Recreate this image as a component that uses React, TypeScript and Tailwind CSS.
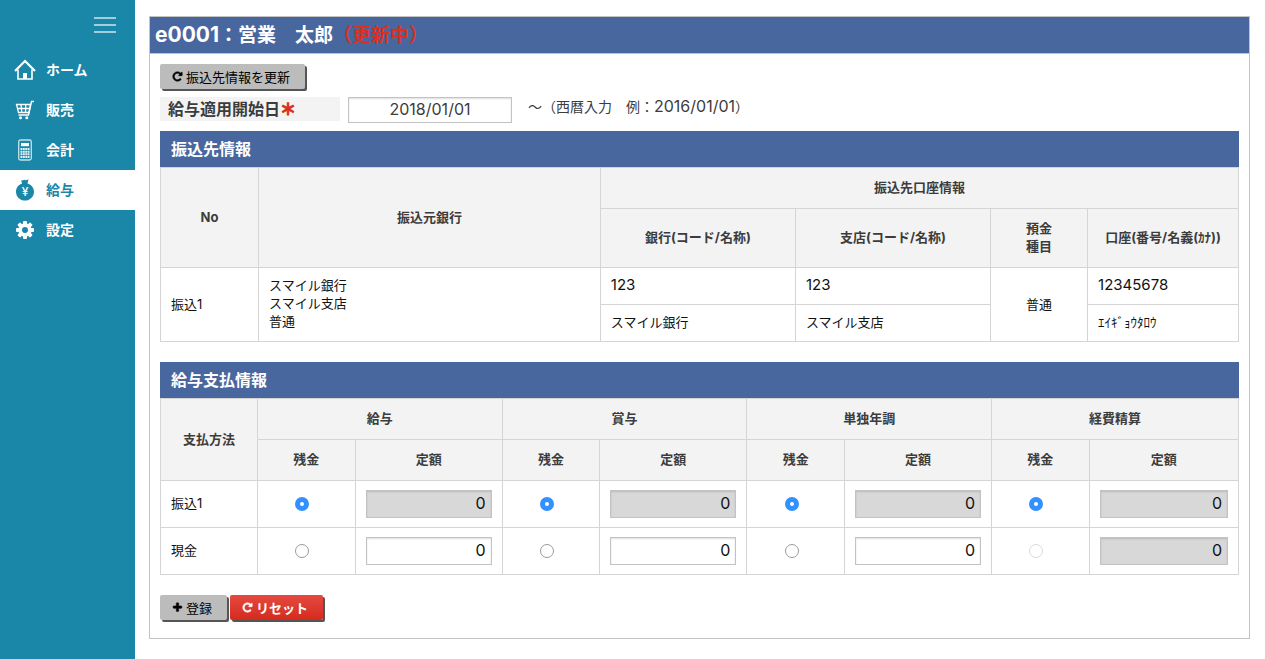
import React, { useState } from 'react';

const menu = [
  { label: 'ホーム', icon: HomeIcon },
  { label: '販売', icon: CartIcon },
  { label: '会計', icon: CalcIcon },
  { label: '給与', icon: MoneyBagIcon, active: true },
  { label: '設定', icon: GearIcon },
];

const payTypes = ['給与', '賞与', '単独年調', '経費精算'];

const payRows = [
  { key: 'furikomi', label: '振込1', fixed: [true, true, true, true] },
  { key: 'genkin', label: '現金', fixed: [false, false, false, true] },
];

function HomeIcon() {
  return (
    <svg width="22" height="22" viewBox="0 0 22 22" fill="none" stroke="currentColor">
      <path d="M1 12 11 2l10 10" strokeWidth="2.200" />
      <path d="M4 10.500V20h14v-9.500" strokeWidth="1.600" />
      <path d="M9 20v-6h4v6z" fill="currentColor" stroke="none" />
    </svg>
  );
}

function CartIcon() {
  return (
    <svg width="22" height="22" viewBox="0 0 22 22" fill="none" stroke="currentColor">
      <path d="M20 2.500h-2.500L14.500 16H4.500" strokeWidth="1.400" />
      <path d="M2.500 5.500h14L15 13.500H4.500zM3.200 9.500h12.600M7 5.500l.8 8M11.800 5.500l-.3 8" strokeWidth="1.300" />
      <circle cx="6.500" cy="18.800" r="1.500" fill="currentColor" stroke="none" />
      <circle cx="12.800" cy="18.800" r="1.500" fill="currentColor" stroke="none" />
    </svg>
  );
}

function CalcIcon() {
  return (
    <svg width="22" height="22" viewBox="0 0 22 22" fill="none" stroke="currentColor">
      <rect x="4.700" y="1" width="12.600" height="20" rx="1.800" strokeWidth="1.300" opacity=".75" />
      <rect x="7" y="4" width="8" height="3.200" fill="currentColor" stroke="none" />
      <path d="M6.500 10h9M6.500 12.700h9M6.500 15.300h9M6.500 18h9" strokeWidth="1.900" strokeDasharray="1.900 .5" opacity=".9" />
    </svg>
  );
}

function MoneyBagIcon() {
  return (
    <svg width="22" height="22" viewBox="0 0 22 22" fill="currentColor">
      <path d="M7 1.500c1.500.2 2.300 0 3.300-.7.900.7 2.200.6 4.200-.5l-1 4.200c3.800 1.200 6.500 4.300 6.500 8.200 0 5-4 8.800-9 8.800s-9-3.800-9-8.800c0-3.900 2.500-7 6.200-8.200z" />
      <text x="11" y="17" textAnchor="middle" fontSize="12" fontWeight="500" fill="#fff">¥</text>
    </svg>
  );
}

function GearIcon() {
  return (
    <svg width="22" height="22" viewBox="0 0 22 22">
      <g fill="currentColor">
        <rect x="9" y="2" width="4" height="18" rx="1" />
        <rect x="9" y="2" width="4" height="18" rx="1" transform="rotate(45 11 11)" />
        <rect x="9" y="2" width="4" height="18" rx="1" transform="rotate(90 11 11)" />
        <rect x="9" y="2" width="4" height="18" rx="1" transform="rotate(135 11 11)" />
      </g>
      <circle cx="11" cy="11" r="4.800" fill="none" stroke="currentColor" strokeWidth="3.800" />
      <circle cx="11" cy="11" r="3" fill="#1a87a9" />
    </svg>
  );
}

function RepeatIcon() {
  return (
    <svg width="11" height="11" viewBox="0 0 1792 1792" fill="currentColor" stroke="currentColor" strokeWidth="90">
      <path d="M1664 256v448q0 26-19 45t-45 19h-448q-42 0-59-40-17-39 14-69l138-138q-148-137-349-137-104 0-198.500 40.500t-163.500 109.500-109.500 163.500-40.500 198.500 40.500 198.500 109.500 163.500 163.500 109.500 198.500 40.500q119 0 225-52t179-147q7-10 23-12 15 0 25 9l137 138q9 8 9.500 20.500t-7.500 22.500q-109 132-264 204.500t-327 72.500q-156 0-298-61t-245-164-164-245-61-298 61-298 164-245 245-164 298-61q147 0 284.500 55.500t244.500 156.500l130-129q29-31 70-14 39 17 39 59z" />
    </svg>
  );
}

function PlusIcon() {
  return (
    <svg width="11" height="11" viewBox="0 0 1792 1792" fill="currentColor" stroke="currentColor" strokeWidth="90">
      <path d="M1600 736v192q0 40-28 68t-68 28h-416v416q0 40-28 68t-68 28h-192q-40 0-68-28t-28-68v-416h-416q-40 0-68-28t-28-68v-192q0-40 28-68t68-28h416v-416q0-40 28-68t68-28h192q40 0 68 28t28 68v416h416q40 0 68 28t28 68z" />
    </svg>
  );
}

function SectionTitle({ children }: { children: React.ReactNode }) {
  return <h2 className="bg-[#48679f] px-[11px] text-base leading-[36px] font-bold text-white">{children}</h2>;
}

const th = 'border border-[#d5d5d5] bg-[#f3f3f3] px-2 pt-[10px] pb-3 text-center font-bold text-[#3c3c3c]';
const td = 'border border-[#d5d5d5] px-[10px] pt-2 pb-[10px]';
const btn = 'flex h-[25px] items-center gap-[3px] rounded-[2px] pr-[15px] pl-3 text-[13px] shadow-[2px_2px_0_#555]';
const grayBtn = `${btn} bg-[#bcbcbc] text-black`;
const redBtn = `${btn} bg-linear-to-b from-[#e5493f] to-[#d42a1c] font-bold text-white`;

export default function App() {
  const [selected, setSelected] = useState<string[]>(payTypes.map(() => 'furikomi'));

  return (
    <div className="flex min-h-screen bg-white font-['Inter','Noto_Sans_CJK_JP',sans-serif] text-[13px] leading-[18px] text-[#111]">
      <nav className="w-[135px] shrink-0 bg-[#1a87a9]">
        <div className="flex h-[50px] justify-end pr-[19px]">
          <button type="button" aria-label="メニュー" className="flex flex-col justify-center gap-[5px]">
            <span className="h-[2px] w-[22px] bg-[#a3cfdd]"></span>
            <span className="h-[2px] w-[22px] bg-[#a3cfdd]"></span>
            <span className="h-[2px] w-[22px] bg-[#a3cfdd]"></span>
          </button>
        </div>

        <ul>
          {menu.map(({ label, icon: Icon, active }) => (
            <li key={label}>
              <a
                href="#"
                className={`flex h-10 items-center gap-[10px] pl-[14px] text-sm font-bold ${active ? 'bg-white text-[#1a87a9]' : 'text-white'}`}
              >
                <Icon />
                {label}
              </a>
            </li>
          ))}
        </ul>
      </nav>

      <main className="min-w-0 flex-1 pt-4 pr-[15px] pl-[14px]">
        <div className="border border-[#c3c3c3]">
          <h1 className="h-[37px] border-b border-[#c3c3c3] bg-[#48679f] px-[5px] text-[19px] leading-[36px] font-bold text-white">
            <span className="text-[21px]">e0001</span>：営業　太郎<span className="text-[#d9301f]">（更新中）</span>
          </h1>

          <div className="px-[10px] pt-[10px] pb-[18px]">
            <button type="button" className={grayBtn}>
              <RepeatIcon />
              振込先情報を更新
            </button>

            <div className="mt-2 mb-2 flex items-start gap-2">
              <label htmlFor="startDate" className="w-[180px] bg-[#f3f3f3] px-2 text-base leading-6 font-bold text-[#3c3c3c]">
                給与適用開始日<span className="text-[#d9301f] [-webkit-text-stroke:1px]">＊</span>
              </label>
              <input
                id="startDate"
                type="text"
                defaultValue="2018/01/01"
                className="h-[26px] w-[164px] border border-[#c3c3c3] pb-[2px] text-center text-base text-[#3c3c3c] inset-shadow-[0_1px_2px_#0002]"
              />
              <span className="pl-2 text-sm leading-[18px] text-[#3c3c3c]">
                ～（西暦入力　例：<span className="text-base leading-[18px]">2016/01/01</span>）
              </span>
            </div>

            <SectionTitle>振込先情報</SectionTitle>
            <table className="w-full table-fixed border-collapse">
              <colgroup>
                <col className="w-[9.1%]" />
                <col className="w-[31.7%]" />
                <col className="w-[18.1%]" />
                <col className="w-[18.1%]" />
                <col className="w-[9%]" />
                <col className="w-[14%]" />
              </colgroup>
              <thead>
                <tr>
                  <th rowSpan={2} className={th}>No</th>
                  <th rowSpan={2} className={th}>振込元銀行</th>
                  <th colSpan={4} className={th}>振込先口座情報</th>
                </tr>
                <tr>
                  <th className={th}>銀行(コード/名称)</th>
                  <th className={th}>支店(コード/名称)</th>
                  <th className={th}>預金<br />種目</th>
                  <th className={th}>口座(番号/名義(ｶﾅ))</th>
                </tr>
              </thead>
              <tbody>
                <tr>
                  <td rowSpan={2} className={td}>振込1</td>
                  <td rowSpan={2} className={`${td} align-top`}>
                    スマイル銀行<br />
                    スマイル支店<br />
                    普通
                  </td>
                  <td className={`${td} text-[15px]`}>123</td>
                  <td className={`${td} text-[15px]`}>123</td>
                  <td rowSpan={2} className={`${td} text-center`}>普通</td>
                  <td className={`${td} text-[15px]`}>12345678</td>
                </tr>
                <tr>
                  <td className={td}>スマイル銀行</td>
                  <td className={td}>スマイル支店</td>
                  <td className={td}>ｴｲｷﾞｮｳﾀﾛｳ</td>
                </tr>
              </tbody>
            </table>

            <div className="mt-5">
              <SectionTitle>給与支払情報</SectionTitle>
              <table className="w-full table-fixed border-collapse">
                <colgroup>
                  <col className="w-[9%]" />
                  {payTypes.map((type, i) => (
                    <React.Fragment key={type}>
                      <col className="w-[9.05%]" />
                      <col className={i < 3 ? 'w-[13.65%]' : ''} />
                    </React.Fragment>
                  ))}
                </colgroup>
                <thead>
                  <tr>
                    <th rowSpan={2} className={th}>支払方法</th>
                    {payTypes.map((type) => (
                      <th key={type} colSpan={2} className={th}>{type}</th>
                    ))}
                  </tr>
                  <tr>
                    {payTypes.map((type) => (
                      <React.Fragment key={type}>
                        <th className={th}>残金</th>
                        <th className={th}>定額</th>
                      </React.Fragment>
                    ))}
                  </tr>
                </thead>
                <tbody>
                  {payRows.map((row) => (
                    <tr key={row.key}>
                      <td className={td}>{row.label}</td>
                      {payTypes.map((type, i) => (
                        <React.Fragment key={type}>
                          <td className="border border-[#d5d5d5] pr-2">
                            <input
                              type="radio"
                              name={`zankin-${i}`}
                              aria-label={`${type} 残金 ${row.label}`}
                              checked={selected[i] === row.key}
                              disabled={row.key === 'genkin' && row.fixed[i]}
                              onChange={() => setSelected(selected.map((s, n) => (n === i ? row.key : s)))}
                              className="mx-auto block size-[14px] appearance-none rounded-full border border-[#9b9b9b] bg-white checked:border-[5px] checked:border-[#3390ff] disabled:border-[#dadada]"
                            />
                          </td>
                          <td className="border border-[#d5d5d5] px-[10px] py-[9px]">
                            <input
                              type="text"
                              defaultValue="0"
                              readOnly={row.fixed[i]}
                              aria-label={`${type} 定額 ${row.label}`}
                              className={`block h-7 w-full border border-[#c3c3c3] px-[5px] pb-[2px] text-right text-base inset-shadow-[0_1px_2px_#0002] ${row.fixed[i] ? 'bg-[#d8d8d8]' : 'bg-white'}`}
                            />
                          </td>
                        </React.Fragment>
                      ))}
                    </tr>
                  ))}
                </tbody>
              </table>
            </div>

            <div className="mt-5 flex gap-[3px]">
              <button type="button" className={grayBtn}>
                <PlusIcon />
                登録
              </button>
              <button type="button" className={redBtn}>
                <RepeatIcon />
                リセット
              </button>
            </div>
          </div>
        </div>
      </main>
    </div>
  );
}
